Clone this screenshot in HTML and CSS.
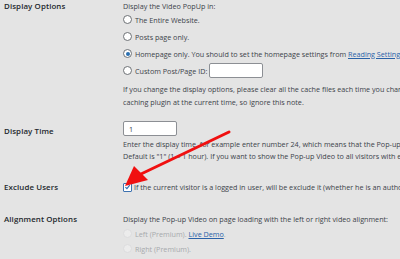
FILE: index.html
```html
<!DOCTYPE html>
<html lang="en">
<head>
    <meta charset="UTF-8">
    <title>Video PopUp Settings</title>
    <link rel="stylesheet" href="styles.css">
</head>
<body>
    <div class="settings">

        <!-- Display options -->
        <div class="row row-display">
            <div class="label">Display Options</div>
            <div class="field">
                <p class="line">Display the Video PopUp in:</p>
                <label class="option"><span class="radio"></span><span>The Entire Website.</span></label>
                <label class="option"><span class="radio"></span><span>Posts page only.</span></label>
                <label class="option"><span class="radio checked"></span><span>Homepage only. You should to set the homepage settings from <a href="#">Reading Settings</a>.</span></label>
                <label class="option"><span class="radio"></span><span>Custom Post/Page ID:</span><span class="input input-id"></span></label>
                <p class="note">If you change the display options, please clear all the cache files each time you change the settings, if you are using a<br>caching plugin at the current time, so ignore this note.</p>
            </div>
        </div>

        <!-- Display time -->
        <div class="row row-time">
            <div class="label">Display Time</div>
            <div class="field">
                <span class="input input-time">1</span>
                <p class="note">Enter the display time, for example enter number 24, which means that the Pop-up Video will be displayed once every 24 hours.<br>Default is "1" (1 = 1 hour). If you want to show the Pop-up Video to all visitors with each visit, enter 0.</p>
            </div>
        </div>

        <!-- Exclude users -->
        <div class="row row-exclude">
            <div class="label">Exclude Users</div>
            <div class="field">
                <label class="option check-line"><span class="checkbox"><svg viewBox="0 0 10 10" width="8" height="8"><path d="M2 5.2 L4.2 7.4 L8.2 2.4" fill="none" stroke="#2f6fb3" stroke-width="1.6"/></svg></span><span>If the current visitor is a logged in user, will be exclude it (whether he is an author or an administrator).</span></label>
            </div>
        </div>

        <!-- Alignment options -->
        <div class="row row-align">
            <div class="label">Alignment Options</div>
            <div class="field">
                <p class="line">Display the Pop-up Video on page loading with the left or right video alignment:</p>
                <label class="option disabled"><span class="radio"></span><span>Left (Premium). <a href="#">Live Demo</a>.</span></label>
                <label class="option disabled"><span class="radio"></span><span>Right (Premium).</span></label>
                <label class="option disabled"><span class="radio"></span><span>Center (Premium).</span></label>
            </div>
        </div>
    </div>

    <!-- red arrow pointing at the checkbox -->
    <svg class="arrow" width="400" height="259" viewBox="0 0 400 259">
        <line x1="229" y1="132" x2="141" y2="174" stroke="#f01010" stroke-width="3" stroke-linecap="round"/>
        <polygon points="125,186 134,166 148,180" fill="#f01010"/>
    </svg>
</body>
</html>
```

FILE: styles.css
```css
body {
    margin: 0;
    background-color: #e4e4e4;
    font-family: 'Open Sans', sans-serif;
    font-size: 7.2px;
    color: #3c434a;
    overflow: hidden;
    height: 259px;
    position: relative;
}

p {
    margin: 0;
}

a {
    color: #2a62a8;
    text-decoration: underline;
}

.settings {
    padding-left: 4px;
}

.row {
    display: grid;
    grid-template-columns: 119px 1fr;
    white-space: nowrap;
}

.label {
    font-weight: 600;
    font-size: 7.9px;
    letter-spacing: 0.1px;
    color: #23282d;
    line-height: 12px;
}

.line {
    line-height: 12px;
}

.option {
    display: flex;
    align-items: center;
    height: 17px;
}

.row-display .option:first-of-type {
    margin-top: -1px;
}

.radio {
    width: 7px;
    height: 7px;
    border: 1px solid #6d7175;
    border-radius: 50%;
    background-color: #fff;
    margin-right: 3px;
    display: inline-flex;
    align-items: center;
    justify-content: center;
    flex-shrink: 0;
}

.radio.checked::after {
    content: "";
    width: 4px;
    height: 4px;
    border-radius: 50%;
    background-color: #2a6fb0;
}

.input {
    display: inline-flex;
    align-items: center;
    height: 13px;
    border: 1px solid #8c8f94;
    border-radius: 2px;
    background-color: #fff;
    box-sizing: content-box;
    padding: 0 5px;
}

.input-id {
    width: 42px;
    margin-left: 2px;
}

.input-time {
    width: 42px;
}

.note {
    line-height: 12.5px;
    margin-top: 4px;
}

.row-time {
    margin-top: 13px;
}

.row-time .label {
    padding-top: 4px;
}

.row-time .note {
    margin-top: 2px;
    line-height: 12px;
}

.row-exclude {
    margin-top: 19px;
}

.check-line {
    height: 12px;
}

.checkbox {
    width: 7px;
    height: 7px;
    border: 1px solid #3d72b0;
    border-radius: 1px;
    background-color: #fff;
    margin-right: 2px;
    display: inline-flex;
    align-items: center;
    justify-content: center;
    flex-shrink: 0;
}

.row-align {
    margin-top: 20px;
}

.row-align .option {
    height: 15px;
}

.row-align .option:first-of-type {
    margin-top: 1px;
}

.disabled {
    color: #a7aaad;
}

.disabled .radio {
    border-color: #dcdcde;
    background-color: #ececec;
}

.arrow {
    position: absolute;
    top: 0;
    left: 0;
    pointer-events: none;
}
```
